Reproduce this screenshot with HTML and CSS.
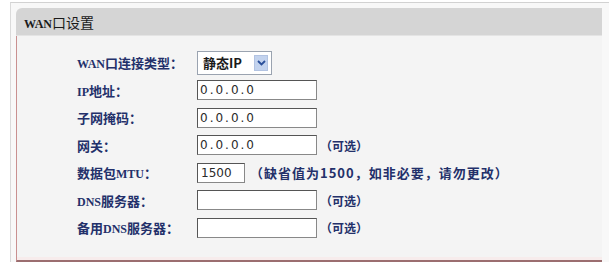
FILE: index.html
```html
<!DOCTYPE html>
<html lang="zh-CN">
<head>
<meta charset="utf-8">
<link rel="stylesheet" href="styles.css">
</head>
<body>
<div class="frame">
  <div class="panel">
    <div class="head"><span class="latin">WAN</span>口设置</div>
    <div class="body">
      <div class="row">
        <span class="label"><span class="latin">WAN</span>口连接类型：</span>
        <span class="select"><span class="sel-text">静态IP</span><span class="sel-btn"><svg width="9" height="6" viewBox="0 0 9 6"><path d="M1 1 L4.5 4.5 L8 1" fill="none" stroke="#2a4f9a" stroke-width="1.8"/></svg></span></span>
      </div>
      <div class="row">
        <span class="label"><span class="latin">IP</span>地址：</span>
        <span class="input wide">0.0.0.0</span>
      </div>
      <div class="row">
        <span class="label">子网掩码：</span>
        <span class="input wide">0.0.0.0</span>
      </div>
      <div class="row">
        <span class="label">网关：</span>
        <span class="input wide">0.0.0.0</span>
        <span class="note">（可选）</span>
      </div>
      <div class="row">
        <span class="label">数据包<span class="latin">MTU</span>：</span>
        <span class="input short">1500</span>
        <span class="note far">（缺省值为1500，如非必要，请勿更改）</span>
      </div>
      <div class="row">
        <span class="label"><span class="latin">DNS</span>服务器：</span>
        <span class="input wide"></span>
        <span class="note">（可选）</span>
      </div>
      <div class="row">
        <span class="label">备用<span class="latin">DNS</span>服务器：</span>
        <span class="input wide"></span>
        <span class="note">（可选）</span>
      </div>
    </div>
  </div>
</div>
</body>
</html>
```
FILE: styles.css
```css
html, body {
  margin: 0;
  padding: 0;
  background: #ffffff;
}
body {
  width: 609px;
  height: 262px;
  overflow: hidden;
  font-family: "Noto Sans CJK SC", "DejaVu Sans", sans-serif;
}
.frame {
  margin: 2px 0 0 10px;
  height: 260px;
  border-top: 1px solid #d2d2d2;
  border-left: 1px solid #dadada;
  background: #f8f8f8;
  padding: 5px 0 0 5px;
  box-sizing: border-box;
}
.panel {
  width: 586px;
}
.head {
  height: 28px;
  line-height: 28px;
  background: #d5d5d5;
  border-radius: 6px 0 0 0;
  padding-left: 8px;
  font-size: 14px;
  color: #1a1a1a;
  border-bottom: 1px solid #e4e4e4;
  box-sizing: border-box;
}
.head .latin {
  font-size: 12px;
}
.body {
  background: #f4f4f4;
  border-left: 1px solid #c99090;
  border-bottom: 2px solid #9b6e70;
  box-shadow: inset 0 -3px 0 #f7ecec;
  height: 226px;
  box-sizing: border-box;
  padding: 13px 0 0 60px;
}
.row {
  display: flex;
  align-items: center;
  height: 27.5px;
}
.label {
  width: 120px;
  flex: none;
  font-size: 13px;
  font-weight: bold;
  color: #23306a;
  white-space: nowrap;
}
.latin {
  font-family: "Liberation Serif", serif;
  font-size: 12px;
  font-weight: bold;
}
.select {
  display: flex;
  align-items: center;
  justify-content: space-between;
  width: 75px;
  height: 24px;
  box-sizing: border-box;
  border: 1px solid #9aa3b0;
  background: #ffffff;
  padding: 0 3px 0 5px;
}
.sel-text {
  font-size: 13px;
  font-weight: bold;
  color: #1a1a1a;
}
.sel-btn {
  width: 12px;
  height: 14px;
  background: #c3d3ee;
  border: 1px solid #b2c3e2;
  display: flex;
  align-items: center;
  justify-content: center;
}
.input {
  height: 20px;
  box-sizing: border-box;
  background: #ffffff;
  border: 1px solid #555555;
  border-right-color: #888;
  border-bottom-color: #888;
  font-family: "DejaVu Sans", sans-serif;
  font-size: 12px;
  line-height: 18px;
  padding-left: 2px;
  color: #2a2a2a;
  letter-spacing: 2px;
}
.wide {
  width: 120px;
}
.short {
  width: 48px;
  letter-spacing: 0;
  padding-left: 3px;
}
.note {
  margin-left: 3px;
  font-size: 12px;
  font-weight: bold;
  color: #23306a;
  white-space: nowrap;
}
.note.far {
  margin-left: 5px;
  font-size: 13px;
  letter-spacing: 1px;
}
```
